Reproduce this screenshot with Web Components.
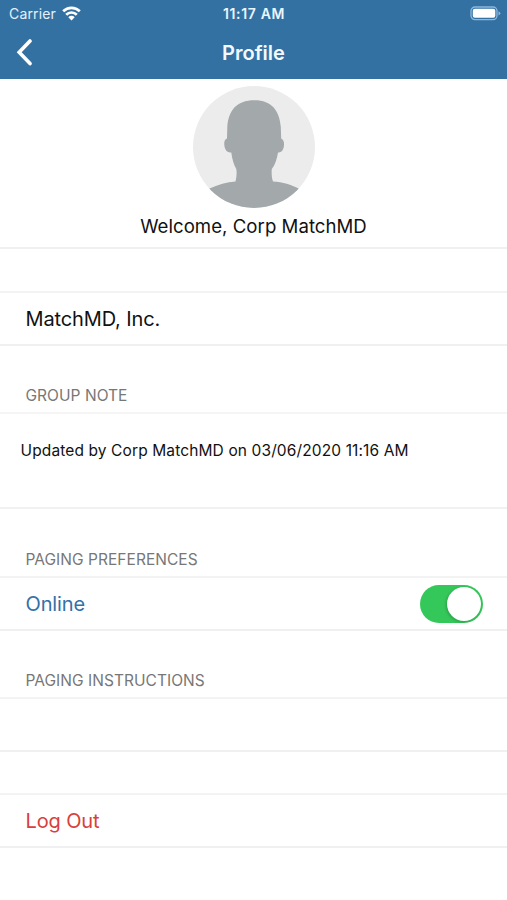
<!DOCTYPE html>
<html lang="en">
<head>
<meta charset="utf-8">
<title>Profile</title>
<style>
body{margin:0;background:#fff;color:#111;font-family:Inter,"Liberation Sans",sans-serif}
</style>
</head>
<body>
<profile-screen></profile-screen>
<script>
const define = (name, markup) => customElements.define(name, class extends HTMLElement {
  constructor() {
    super();
    this.attachShadow({ mode: "open" }).innerHTML = markup;
  }
});

define("status-bar", `
<style>
:host{display:grid;grid-template-columns:1fr auto 1fr;align-items:center;height:27px;padding:0 6px 0 9px;font-size:14px;color:#e4f1fb}
.left{display:flex;align-items:center;gap:6px}
.carrier{letter-spacing:.15px}
.time{font-weight:600;font-size:14px;letter-spacing:.65px;margin-right:2px;color:#eaf5fd}
svg{display:block}
.battery{justify-self:end}
</style>
<div class="left"><span class="carrier">Carrier</span>
<svg width="19" height="15" viewBox="0 0 19 15" fill="none" stroke="#fff" stroke-width="2.7"><path d="M1.2 5.2a11.8 11.8 0 0 1 16.600 0"/><path d="M4.200 8.700a7.500 7.500 0 0 1 10.600 0"/><path d="M9.500 14.400 6.300 11.200a4.500 4.500 0 0 1 6.400 0z" fill="#fff" stroke="none"/></svg></div>
<span class="time">11:17 AM</span>
<svg class="battery" width="31" height="15" viewBox="0 0 31 15"><rect x="1" y="1" width="26" height="12.6" rx="4" fill="none" stroke="#8db8db" stroke-width="1.3"/><rect x="2.8" y="2.8" width="22.5" height="9" rx="2" fill="#fff"/><path d="M28.5 5.2q1.8.8 1.8 2.1t-1.8 2.1z" fill="#8db8db"/></svg>`);

define("nav-bar", `
<style>
:host{display:grid;grid-template-columns:1fr auto 1fr;align-items:center;height:52px;padding:0 16px 2px;box-sizing:border-box;color:#f2f9ff}
h1{margin:1px 0 0;font-size:20px;font-weight:600;line-height:24px}
svg{display:block}
</style>
<svg width="17" height="28" viewBox="0 0 17 28" fill="none" stroke="#fff" stroke-width="3.6" stroke-linecap="round" stroke-linejoin="miter"><path d="M14 3 3.2 14.3 14 25.6"/></svg>
<h1><slot></slot></h1><span></span>`);

define("user-avatar", `
<style>:host{display:block;width:122px;height:122px;border-radius:50%;overflow:hidden;background:#ececec}svg{display:block}</style>
<svg width="122" height="122" viewBox="0 0 122 122" fill="#a3a8ab"><path d="M61.500 14.300C43 14.300 35.500 25 34.300 41L34 52.500C31.500 53.500 31 56 31.300 59C31.800 64 34 66.500 38.300 66.500C39 73 41 79 43.300 83C44 87 43.500 91 42.500 95.500C34 96 25 98.500 16 102.800V122H106V102.800C98 98.500 90 96 80 95.500C78.500 91 78.500 87 78.800 83C82 79 84 73 85 66.500C88.500 66.500 90.700 64 91 59C91.200 56 90.500 53.500 88.200 52.500L87.800 41C86.500 25 79 14.300 61.500 14.300Z"/></svg>`);

define("profile-hero", `
<style>
:host{display:flex;flex-direction:column;align-items:center;box-sizing:border-box;height:170px;padding-top:7px;border-bottom:2px solid #f0f0f0}
p{margin:6px 0 0;font-size:18.6px;line-height:24px;letter-spacing:.04px}
</style>
<user-avatar></user-avatar><p><slot></slot></p>`);

define("section-heading", `
<style>
:host{display:flex;align-items:flex-end;box-sizing:border-box;padding:0 25.5px 6.5px;height:var(--h,42px);color:#777;font-size:15.5px;line-height:20px;letter-spacing:.04px}
</style><slot></slot>`);

define("list-row", `
<style>
:host{display:flex;align-items:center;justify-content:space-between;box-sizing:border-box;height:55px;padding:0 24px 0 25.5px;border-top:2px solid #f3f3f3;border-bottom:2px solid #f0f0f0;font-size:20px;letter-spacing:-.13px}
</style><slot></slot>`);

define("group-note", `
<style>
:host{display:block;box-sizing:border-box;height:97px;padding:27px 20.5px 0;border-top:2px solid #f5f5f5;border-bottom:2px solid #f1f1f1;font-size:15.500px;line-height:20px;letter-spacing:.12px}
</style><slot></slot>`);

define("toggle-switch", `
<style>
:host{display:flex;justify-content:flex-end;align-items:center;box-sizing:border-box;width:63px;height:38px;border-radius:19px;padding:2px;background:#34c759}
i{display:block;width:34px;height:34px;border-radius:50%;background:#fff;box-shadow:-1px 1px 3px #0003}
</style><i></i>`);

define("profile-screen", `
<style>
:host{display:block;height:900px;background:#fff;overflow:hidden}
header{height:79px;background:#3371a3}
</style>
<header><status-bar></status-bar><nav-bar>Profile</nav-bar></header>
<profile-hero>Welcome, Corp MatchMD</profile-hero>
<list-row style="margin-top:42px">MatchMD, Inc.</list-row>
<section-heading style="--h:66px">GROUP NOTE</section-heading>
<group-note>Updated by Corp MatchMD on 03/06/2020 11:16 AM</group-note>
<section-heading style="--h:67px">PAGING PREFERENCES</section-heading>
<list-row style="color:#3371a8"><span>Online</span><toggle-switch></toggle-switch></list-row>
<section-heading style="--h:66px">PAGING INSTRUCTIONS</section-heading>
<list-row></list-row>
<list-row style="margin-top:41px;color:#d9403c">Log Out</list-row>`);
</script>
</body>
</html>
